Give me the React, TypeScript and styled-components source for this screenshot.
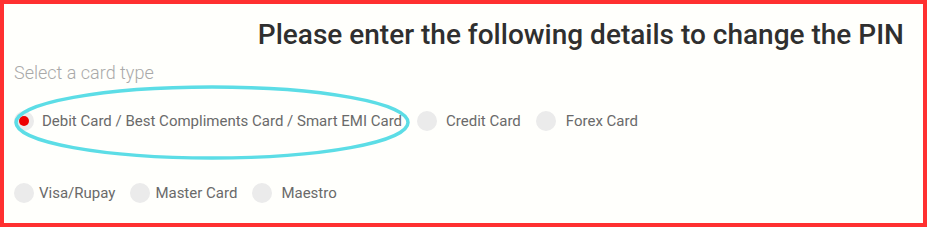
import React from "react";
import styled, { createGlobalStyle } from "styled-components";

const Global = createGlobalStyle`
  html, body { margin: 0; padding: 0; background: #ffffff; }
  body { font-family: Roboto, "Liberation Sans", Arial, sans-serif; }
`;

const Frame = styled.div`
  position: relative;
  box-sizing: border-box;
  width: 927px;
  height: 227px;
  border: 4px solid #ff3030;
  background: #fffffc;
  padding: 14px 19px 0 10px;
`;

const Title = styled.h2`
  margin: 0;
  text-align: right;
  font-family: Roboto, "Liberation Sans", Arial, sans-serif;
  font-weight: 500;
  font-size: 28px;
  line-height: 34px;
  color: #2f2f2f;
`;

const Label = styled.div`
  margin-top: 9px;
  font-weight: 300;
  font-size: 18px;
  line-height: 24px;
  color: #a9a9a9;
`;

const Group = styled.div<{ $top: number }>`
  display: flex;
  align-items: center;
  gap: 15px;
  margin-top: ${(p) => p.$top}px;
`;

const Option = styled.label<{ $gap: number }>`
  display: flex;
  align-items: center;
  gap: ${(p) => p.$gap}px;
  font-size: 15px;
  line-height: 20px;
  color: #6a6a6a;
`;

const Dot = styled.span<{ $checked?: boolean }>`
  position: relative;
  flex: none;
  width: 20px;
  height: 20px;
  border-radius: 50%;
  background: #ebebeb;
  &::after {
    content: "";
    display: ${(p) => (p.$checked ? "block" : "none")};
    position: absolute;
    left: 5px;
    top: 5px;
    width: 10px;
    height: 10px;
    border-radius: 50%;
    background: #ee0000;
  }
`;

const Highlight = styled.svg`
  position: absolute;
  left: 9px;
  top: 81px;
  overflow: visible;
  pointer-events: none;
`;

const row1 = [
  { text: "Debit Card / Best Compliments Card / Smart EMI Card", checked: true, gap: 8 },
  { text: "Credit Card", gap: 9 },
  { text: "Forex Card", gap: 10 },
];
const row2 = [
  { text: "Visa/Rupay", gap: 5 },
  { text: "Master Card", gap: 5 },
  { text: "Maestro", gap: 9 },
];

export default function App() {
  return (
    <>
      <Global />
      <Frame>
        <Title>Please enter the following details to change the PIN</Title>
        <Label>Select a card type</Label>
        <Group $top={26}>
          {row1.map((o) => (
            <Option key={o.text} $gap={o.gap}>
              <Dot $checked={o.checked} />
              {o.text}
            </Option>
          ))}
        </Group>
        <Group $top={52}>
          {row2.map((o) => (
            <Option key={o.text} $gap={o.gap}>
              <Dot />
              {o.text}
            </Option>
          ))}
        </Group>
        <Highlight width="398" height="76" viewBox="0 0 398 76">
          <ellipse cx="199" cy="37.5" rx="196" ry="35.5" fill="none" stroke="#5cdde6" strokeWidth="3.5" />
        </Highlight>
      </Frame>
    </>
  );
}
